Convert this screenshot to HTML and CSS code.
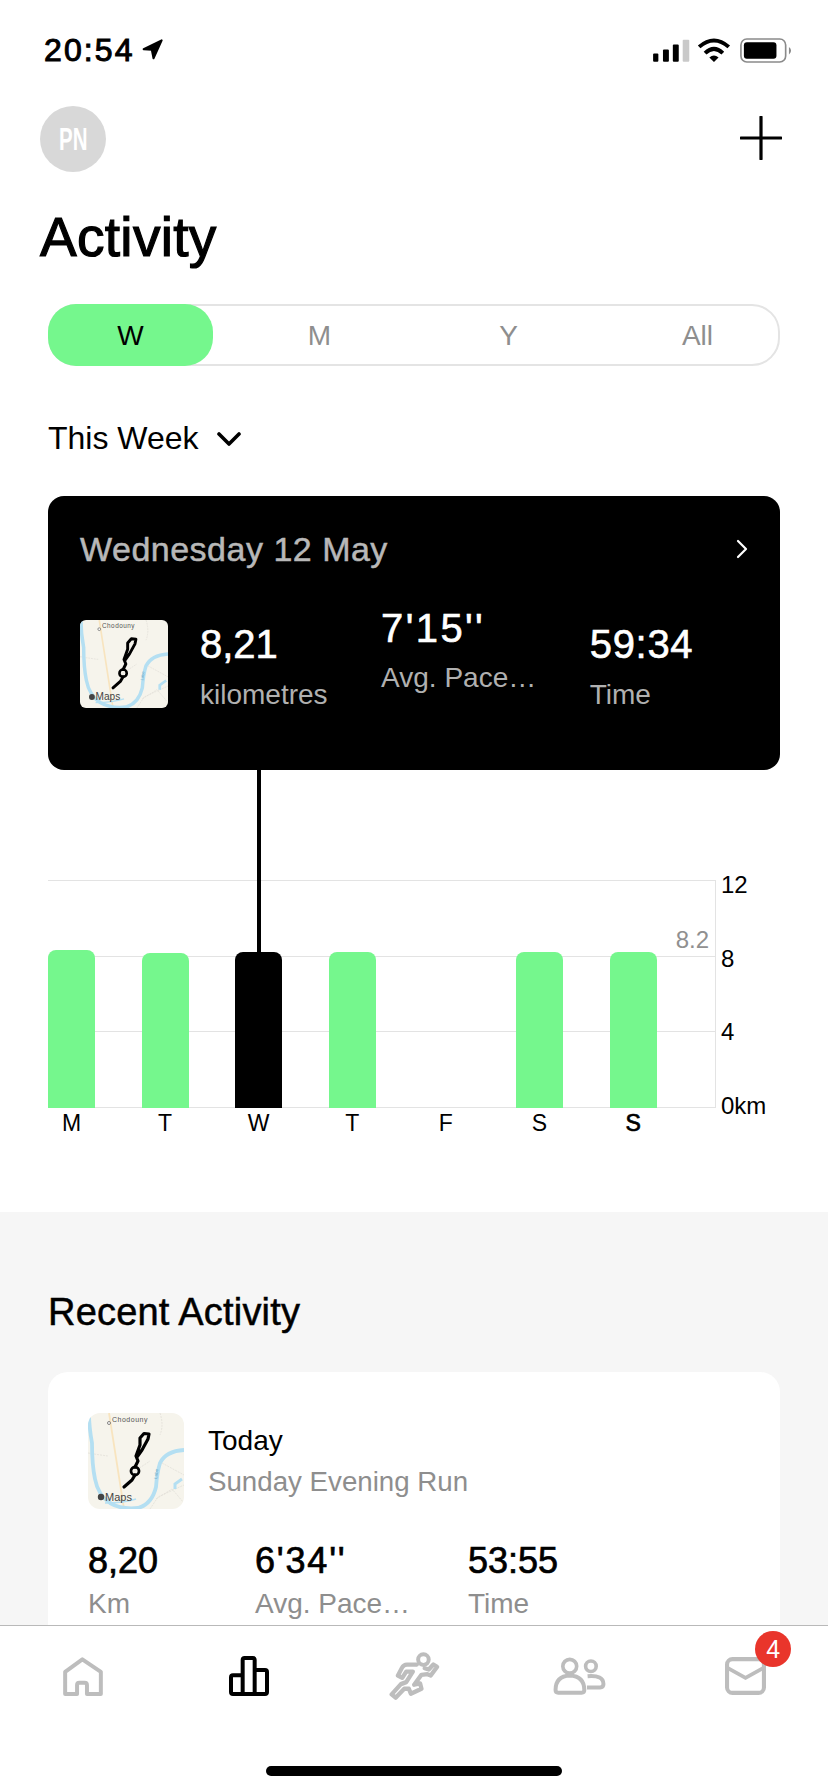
FILE: index.html
```html
<!DOCTYPE html>
<html lang="en">
<head>
    <meta charset="UTF-8">
    <meta name="viewport" content="width=device-width, initial-scale=1.0">
    <title>Activity</title>
    <link rel="stylesheet" href="styles.css">
</head>
<body>
    <!-- Map thumbnail, used by both activity cards -->
    <svg class="defs" aria-hidden="true">
        <symbol id="route-map" viewBox="0 0 96 96">
            <rect width="96" height="96" fill="#f6f4ec"/>
            <path d="M72 0 Q76 12 72 22 M62 96 L70 84 L96 72 M68 86 L84 76 L96 90 M0 40 Q12 42 20 43 M44 60 L62 48 M74 50 L96 62" fill="none" stroke="#e2e0d8" stroke-width="0.8" stroke-dasharray="2 1"/>
            <path d="M21 0 L36 96" fill="none" stroke="#f8e4bf" stroke-width="1.8"/>
            <path d="M1 0 Q1 14 4 30 Q4 52 7 66 Q10 82 22 90 Q34 97 50 95 Q64 91 68 74 Q69 60 72 50 Q78 38 96 37" fill="none" stroke="#b4dff2" stroke-width="3.8"/>
            <path d="M17 90 Q36 90 48 86" fill="none" stroke="#b4dff2" stroke-width="1.6"/>
            <path d="M87 76 V71 L94 66" fill="none" stroke="#b4dff2" stroke-width="3"/>
            <circle cx="21" cy="10" r="1.5" fill="#fff" stroke="#555" stroke-width="0.7"/>
            <text x="24" y="8.5" class="map-town">Chodouny</text>
            <text x="0" y="0" class="map-river" transform="translate(69 66) rotate(-82)">Labe</text>
            <path d="M36 74 L44 67 L47 62 M47 54 L50 48 L48 43 L52 32 L52 25 L56 20.5 L61 21 L60 26 L54 37 L49 44" fill="none" stroke="#000" stroke-width="3.2" stroke-linejoin="round" stroke-linecap="round"/>
            <circle cx="47" cy="58" r="4" fill="none" stroke="#000" stroke-width="2.8"/>
            <circle cx="13" cy="84" r="3.2" fill="#444"/>
            <text x="17" y="87.5" class="map-brand">Maps</text>
        </symbol>
    </svg>

    <div class="screen">
        <div class="status-bar">
            <div class="clock">
                <span>20:54</span>
                <svg class="clock-arrow" viewBox="335 58 62 62"><path d="M340 88 L393 62 L369 115 L364 90 Z" fill="#000" stroke="#000" stroke-width="6" stroke-linejoin="round"/></svg>
            </div>
            <svg class="status-icons" viewBox="40 50 425 76">
                <rect x="40" y="97" width="16" height="25" rx="3" fill="#000"/>
                <rect x="70" y="85" width="18" height="37" rx="3" fill="#000"/>
                <rect x="100" y="70" width="18" height="52" rx="3" fill="#000"/>
                <rect x="130" y="55" width="20" height="67" rx="3" fill="#c9c9c9"/>
                <path d="M180 77 Q225 38 270 77 M198 96 Q225 70 252 96" fill="none" stroke="#000" stroke-width="12"/>
                <path d="M211 109 Q225 97 239 109 L225 123 Z" fill="#000"/>
                <rect x="307" y="53" width="136" height="70" rx="18" fill="none" stroke="#8a8a8a" stroke-width="5"/>
                <rect x="316" y="63" width="99" height="50" rx="9" fill="#000"/>
                <path d="M453 77 Q466 88 453 100 Z" fill="#8a8a8a"/>
            </svg>
        </div>

        <div class="content">
            <div class="top-row">
                <div class="avatar"><span>PN</span></div>
                <svg class="add-icon" viewBox="0 0 42 44"><path d="M21 1 V43 M1 22 H41" stroke="#000" stroke-width="3.2" stroke-linecap="round"/></svg>
            </div>

            <h1 class="page-title">Activity</h1>

            <div class="segment">
                <div class="segment-item active">W</div>
                <div class="segment-item">M</div>
                <div class="segment-item">Y</div>
                <div class="segment-item">All</div>
            </div>

            <div class="period">
                <span>This Week</span>
                <svg class="period-chevron" viewBox="0 0 24 15"><path d="M2 2 L12 12 L22 2" fill="none" stroke="#000" stroke-width="3.6" stroke-linecap="round" stroke-linejoin="round"/></svg>
            </div>

            <!-- Selected day -->
            <div class="day-card">
                <div class="day-card-head">
                    <span>Wednesday 12 May</span>
                    <svg class="day-card-arrow" viewBox="0 0 12 20"><path d="M2 2 L10 10 L2 18" fill="none" stroke="#fff" stroke-width="2.2" stroke-linecap="round" stroke-linejoin="round"/></svg>
                </div>
                <div class="day-card-body">
                    <svg class="map map-small"><use href="#route-map"/></svg>
                    <div class="day-stats">
                        <div class="day-stat">
                            <div class="day-value">8,21</div>
                            <div class="day-label">kilometres</div>
                        </div>
                        <div class="day-stat raised">
                            <div class="day-value pace">7'15''</div>
                            <div class="day-label">Avg. Pace…</div>
                        </div>
                        <div class="day-stat">
                            <div class="day-value wide">59:34</div>
                            <div class="day-label">Time</div>
                        </div>
                    </div>
                </div>
            </div>

            <!-- Weekly chart -->
            <div class="chart">
                <div class="chart-main">
                    <div class="plot">
                        <div class="band"></div>
                        <div class="band"></div>
                        <div class="band"></div>
                        <div class="average">8.2</div>
                        <div class="bars">
                            <div class="bar" style="height: 158px"></div>
                            <div class="bar" style="height: 155px"></div>
                            <div class="bar selected" style="height: 156px"></div>
                            <div class="bar" style="height: 156px"></div>
                            <div></div>
                            <div class="bar" style="height: 156px"></div>
                            <div class="bar" style="height: 156px"></div>
                        </div>
                    </div>
                    <div class="days">
                        <span>M</span>
                        <span>T</span>
                        <span>W</span>
                        <span>T</span>
                        <span>F</span>
                        <span>S</span>
                        <span class="today">S</span>
                    </div>
                </div>
                <div class="axis">
                    <span>12</span>
                    <span>8</span>
                    <span>4</span>
                    <span>0km</span>
                </div>
            </div>

            <!-- Recent activity -->
            <div class="recent">
                <h2 class="recent-title">Recent Activity</h2>
                <div class="recent-card">
                    <div class="recent-head">
                        <svg class="map map-large"><use href="#route-map"/></svg>
                        <div class="recent-names">
                            <div class="recent-when">Today</div>
                            <div class="recent-name">Sunday Evening Run</div>
                        </div>
                    </div>
                    <div class="recent-stats">
                        <div>
                            <div class="recent-value">8,20</div>
                            <div class="recent-label">Km</div>
                        </div>
                        <div>
                            <div class="recent-value pace">6'34''</div>
                            <div class="recent-label">Avg. Pace…</div>
                        </div>
                        <div>
                            <div class="recent-value">53:55</div>
                            <div class="recent-label">Time</div>
                        </div>
                    </div>
                </div>
            </div>
        </div>

        <div class="tab-bar">
            <div class="tabs">
                <div class="tab">
                    <svg class="tab-home" viewBox="40 47 120 118"><path d="M46 159 V92 L98 54 L154 92 V159 H112 V132 Q112 125 105 125 H89 Q82 125 82 132 V159 Z" fill="none" stroke="#bdbdbd" stroke-width="12" stroke-linejoin="round"/></svg>
                </div>
                <div class="tab">
                    <svg class="tab-stats" viewBox="537 48 120 120"><path d="M543 156 V112 Q543 106 549 106 H578 V60 Q578 54 584 54 H608 Q614 54 614 60 V90 H645 Q651 90 651 96 V156 Q651 162 645 162 H549 Q543 162 543 156 Z M578 106 V162 M614 90 V162" fill="none" stroke="#000" stroke-width="12" stroke-linejoin="round"/></svg>
                </div>
                <div class="tab">
                    <svg class="tab-run" viewBox="50 35 155 145">
                        <circle cx="156" cy="58" r="16" fill="none" stroke="#bdbdbd" stroke-width="12"/>
                        <path d="M136 73 H106 Q96 73 91 83 L79 106 L92 113 L104 94 H124 L104 126 L88 132 L60 163 L72 173 L98 146 L112 146 L118 161 L150 146 L146 130 L128 134 L150 104 L168 102 L178 106 L197 80 L186 73 L172 88 L160 84" fill="none" stroke="#bdbdbd" stroke-width="13" stroke-linejoin="round" stroke-linecap="round"/>
                    </svg>
                </div>
                <div class="tab">
                    <svg class="tab-people" viewBox="545 50 165 115">
                        <path d="M555 150 Q555 108 598 106 Q642 108 642 150 Q642 158 634 158 H563 Q555 158 555 150 Z" fill="#fff" stroke="#bdbdbd" stroke-width="12" stroke-linejoin="round"/>
                        <circle cx="598" cy="78" r="21" fill="#fff" stroke="#bdbdbd" stroke-width="11"/>
                        <circle cx="662" cy="78" r="16" fill="none" stroke="#bdbdbd" stroke-width="11"/>
                        <path d="M652 108 Q700 104 700 132 Q700 142 690 142 H650" fill="none" stroke="#bdbdbd" stroke-width="12" stroke-linejoin="round"/>
                    </svg>
                </div>
                <div class="tab">
                    <div class="mail">
                        <svg class="tab-mail" viewBox="45 97 120 111"><rect x="51" y="103" width="108" height="99" rx="16" fill="none" stroke="#bdbdbd" stroke-width="12"/><path d="M51 128 L105 158 L159 128" fill="none" stroke="#bdbdbd" stroke-width="11"/></svg>
                        <span class="badge">4</span>
                    </div>
                </div>
            </div>
            <div class="home-bar"></div>
        </div>
    </div>
</body>
</html>
```

FILE: styles.css
```css
body {
    margin: 0;
    font-family: "Liberation Sans", Arial, sans-serif;
    color: #000;
    background: #fff;
}

.defs {
    display: none;
}

.screen {
    width: 828px;
    height: 1792px;
    display: flex;
    flex-direction: column;
    overflow: hidden;
}

/* Status bar */
.status-bar {
    height: 106px;
    box-sizing: border-box;
    flex-shrink: 0;
    padding: 32px 34px 0 44px;
    display: flex;
    justify-content: space-between;
    align-items: flex-start;
}

.clock {
    display: flex;
    align-items: flex-start;
    gap: 7px;
    font-size: 32px;
    line-height: 36px;
    letter-spacing: 2.1px;
    -webkit-text-stroke: 1px #000;
}

.clock-arrow {
    width: 21px;
    height: 21px;
    margin-top: 7px;
}

.status-icons {
    width: 142px;
    height: 25px;
    margin-top: 6px;
}

.content {
    flex: 1;
    min-height: 0;
    overflow: hidden;
}

.top-row {
    display: flex;
    justify-content: space-between;
    align-items: flex-start;
    padding: 0 46px 0 40px;
}

.avatar {
    width: 66px;
    height: 66px;
    border-radius: 50%;
    background-color: #d8d8d8;
    color: #fff;
    display: flex;
    justify-content: center;
    align-items: center;
    font-size: 32px;
    font-weight: bold;
}

.avatar span {
    transform: scaleX(0.64);
}

.add-icon {
    width: 42px;
    height: 44px;
    margin-top: 10px;
}

.page-title {
    margin: 35px 0 0 40px;
    font-size: 55px;
    line-height: 60px;
    letter-spacing: 0.3px;
    font-weight: normal;
    -webkit-text-stroke: 1.2px #000;
}

/* Week / month / year switch */
.segment {
    margin: 37px 48px 0;
    height: 62px;
    box-sizing: border-box;
    display: grid;
    grid-template-columns: 163px repeat(3, 189px);
    border: 2px solid #e4e4e4;
    border-radius: 28px;
}

.segment-item {
    padding-left: 24px;
    font-size: 28px;
    line-height: 60px;
    text-align: center;
    color: #8e8e8e;
}

.segment-item.active {
    height: 62px;
    box-sizing: border-box;
    margin: -2px 0 0 -2px;
    padding: 1px 0 0;
    line-height: 62px;
    background-color: #75f78d;
    border-radius: 28px;
    color: #000;
}

.period {
    margin: 53px 0 0 48px;
    display: flex;
    align-items: center;
    gap: 18px;
    font-size: 32px;
    line-height: 38px;
}

.period-chevron {
    width: 24px;
    height: 15px;
    margin-top: 3px;
}

/* Selected day card */
.day-card {
    margin: 39px 48px 0;
    height: 274px;
    box-sizing: border-box;
    padding: 33px 32px 0;
    background-color: #000;
    border-radius: 16px;
}

.day-card-head {
    display: flex;
    justify-content: space-between;
    align-items: center;
    font-size: 34px;
    line-height: 40px;
    letter-spacing: 0.5px;
    color: #b8b8b8;
    -webkit-text-stroke: 0.5px #b8b8b8;
}

.day-card-arrow {
    width: 12px;
    height: 20px;
}

.day-card-body {
    display: flex;
    margin-top: 51px;
}

.map {
    display: block;
    flex-shrink: 0;
}

.map-small {
    width: 88px;
    height: 88px;
    border-radius: 6px;
}

.map-large {
    width: 96px;
    height: 96px;
    border-radius: 12px;
}

.map-town {
    font-size: 7px;
    letter-spacing: 0.5px;
    fill: #555;
}

.map-river {
    font-size: 4.5px;
    fill: #6fa9c4;
}

.map-brand {
    font-size: 11px;
    fill: #444;
}

.day-stats {
    display: flex;
    gap: 53.5px;
    margin: 1px 0 0 32px;
}

.day-value {
    font-size: 40px;
    line-height: 46px;
    color: #fff;
    -webkit-text-stroke: 0.6px #fff;
}

.day-value.pace {
    letter-spacing: 2.4px;
}

.day-value.wide {
    letter-spacing: 0.7px;
}

.day-label {
    margin-top: 12px;
    font-size: 28px;
    line-height: 32px;
    color: #b0b0b0;
    white-space: nowrap;
}

.day-stat.raised {
    margin-top: -16px;
}

.day-stat.raised .day-label {
    margin-top: 11px;
}

/* Weekly chart */
.chart {
    margin: 110px 0 0 48px;
    display: flex;
}

.chart-main {
    width: 668px;
}

.plot {
    position: relative;
    height: 228px;
    box-sizing: border-box;
    display: flex;
    flex-direction: column;
    border-top: 1px solid #e3e3e3;
    border-right: 1px solid #e3e3e3;
}

.band {
    flex: 1;
    border-bottom: 1px solid #e3e3e3;
}

.average {
    position: absolute;
    top: 45px;
    right: 6px;
    font-size: 24px;
    line-height: 28px;
    color: #909090;
}

.bars {
    position: absolute;
    inset: 0;
    display: grid;
    grid-template-columns: repeat(7, 47px);
    column-gap: 46.6px;
    align-items: end;
}

.bar {
    position: relative;
    background-color: #75f78d;
    border-radius: 8px 8px 0 0;
}

.bar.selected {
    background-color: #000;
}

/* Line from the selected bar up to the card */
.bar.selected::before {
    content: "";
    position: absolute;
    left: 22px;
    bottom: 100%;
    width: 4px;
    height: 182px;
    background-color: #000;
}

.days {
    display: grid;
    grid-template-columns: repeat(7, 47px);
    column-gap: 46.6px;
    margin-top: 1px;
    font-size: 23px;
    line-height: 28px;
    text-align: center;
}

.days .today {
    -webkit-text-stroke: 0.7px #000;
}

.axis {
    height: 249px;
    margin: -9px 0 0 5px;
    display: flex;
    flex-direction: column;
    justify-content: space-between;
    font-size: 24px;
    line-height: 28px;
}

/* Recent activity */
.recent {
    margin-top: 75px;
    padding: 78px 48px 0;
    background-color: #f6f6f6;
    height: 600px;
}

.recent-title {
    margin: 0;
    font-size: 38px;
    line-height: 44px;
    letter-spacing: 0.2px;
    font-weight: normal;
    -webkit-text-stroke: 0.5px #000;
}

.recent-card {
    margin-top: 38px;
    padding: 41px 40px;
    height: 400px;
    box-sizing: border-box;
    background-color: #fff;
    border-radius: 20px;
}

.recent-head {
    display: flex;
    align-items: center;
    gap: 24px;
}

.recent-when {
    font-size: 28px;
    line-height: 36px;
}

.recent-name {
    margin-top: 5px;
    font-size: 27.7px;
    line-height: 36px;
    color: #8e8e8e;
}

.recent-stats {
    display: grid;
    grid-template-columns: 167px 213px auto;
    margin-top: 31px;
}

.recent-value {
    font-size: 36px;
    line-height: 42px;
    -webkit-text-stroke: 0.7px #000;
}

.recent-value.pace {
    letter-spacing: 1.8px;
}

.recent-label {
    margin-top: 6px;
    font-size: 28px;
    line-height: 32px;
    color: #8e8e8e;
}

/* Tab bar */
.tab-bar {
    height: 167px;
    flex-shrink: 0;
    box-sizing: border-box;
    border-top: 1px solid #b9b9b9;
    background-color: #fff;
    display: flex;
    flex-direction: column;
    align-items: center;
}

.tabs {
    width: 100%;
    height: 100px;
    display: flex;
}

.tab {
    flex: 1;
    display: flex;
    justify-content: center;
    align-items: center;
}

.tab-home {
    width: 40px;
    height: 39px;
}

.tab-stats {
    width: 40px;
    height: 40px;
    margin-left: 2px;
}

.tab-run {
    width: 52px;
    height: 48px;
}

.tab-people {
    width: 55px;
    height: 38px;
}

.mail {
    position: relative;
    display: flex;
    margin-left: 1px;
}

.tab-mail {
    width: 41px;
    height: 38px;
}

.badge {
    position: absolute;
    top: -26px;
    left: 30px;
    width: 36px;
    height: 36px;
    border-radius: 50%;
    background-color: #e9352b;
    color: #fff;
    font-size: 25px;
    line-height: 36px;
    text-align: center;
}

.home-bar {
    width: 296px;
    height: 10px;
    margin-top: 40px;
    border-radius: 5px;
    background-color: #000;
}
```
